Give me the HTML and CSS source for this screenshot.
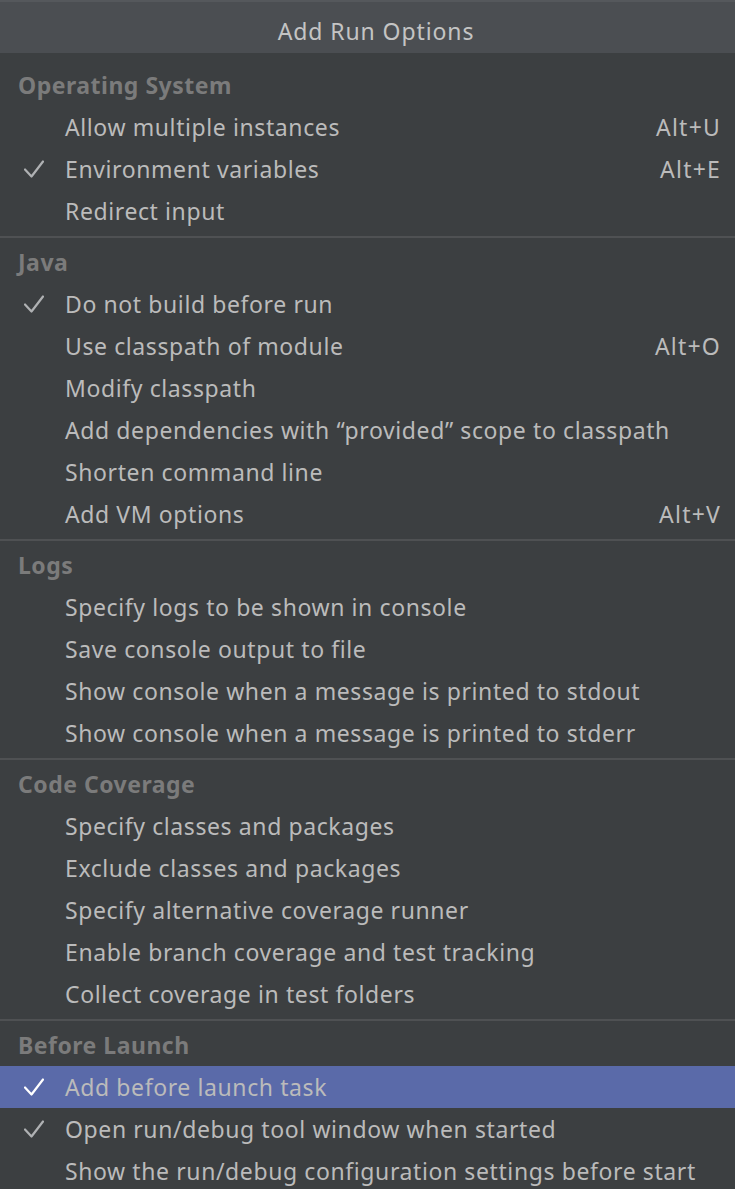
FILE: index.html
```html
<!DOCTYPE html>
<html>
<head>
<meta charset="utf-8">
<link rel="stylesheet" href="styles.css">
</head>
<body>
<div class="popup">
  <div class="title">Add Run Options</div>
  <div class="menu">
    <div class="group">
      <div class="header">Operating System</div>
      <div class="item"><span class="check"></span><span class="label">Allow multiple instances</span><span class="key">Alt+U</span></div>
      <div class="item checked"><span class="check"><svg viewBox="0 0 20 18" width="20" height="18"><path d="M1 9.5 L7.5 16.5 L19 1.5"/></svg></span><span class="label">Environment variables</span><span class="key">Alt+E</span></div>
      <div class="item"><span class="check"></span><span class="label">Redirect input</span><span class="key"></span></div>
    </div>
    <div class="sep"></div>
    <div class="group">
      <div class="header">Java</div>
      <div class="item checked"><span class="check"><svg viewBox="0 0 20 18" width="20" height="18"><path d="M1 9.5 L7.5 16.5 L19 1.5"/></svg></span><span class="label">Do not build before run</span><span class="key"></span></div>
      <div class="item"><span class="check"></span><span class="label">Use classpath of module</span><span class="key">Alt+O</span></div>
      <div class="item"><span class="check"></span><span class="label">Modify classpath</span><span class="key"></span></div>
      <div class="item"><span class="check"></span><span class="label">Add dependencies with “provided” scope to classpath</span><span class="key"></span></div>
      <div class="item"><span class="check"></span><span class="label">Shorten command line</span><span class="key"></span></div>
      <div class="item"><span class="check"></span><span class="label">Add VM options</span><span class="key">Alt+V</span></div>
    </div>
    <div class="sep"></div>
    <div class="group">
      <div class="header">Logs</div>
      <div class="item"><span class="check"></span><span class="label">Specify logs to be shown in console</span><span class="key"></span></div>
      <div class="item"><span class="check"></span><span class="label">Save console output to file</span><span class="key"></span></div>
      <div class="item"><span class="check"></span><span class="label">Show console when a message is printed to stdout</span><span class="key"></span></div>
      <div class="item"><span class="check"></span><span class="label">Show console when a message is printed to stderr</span><span class="key"></span></div>
    </div>
    <div class="sep"></div>
    <div class="group">
      <div class="header">Code Coverage</div>
      <div class="item"><span class="check"></span><span class="label">Specify classes and packages</span><span class="key"></span></div>
      <div class="item"><span class="check"></span><span class="label">Exclude classes and packages</span><span class="key"></span></div>
      <div class="item"><span class="check"></span><span class="label">Specify alternative coverage runner</span><span class="key"></span></div>
      <div class="item"><span class="check"></span><span class="label">Enable branch coverage and test tracking</span><span class="key"></span></div>
      <div class="item"><span class="check"></span><span class="label">Collect coverage in test folders</span><span class="key"></span></div>
    </div>
    <div class="sep"></div>
    <div class="group">
      <div class="header">Before Launch</div>
      <div class="item checked selected"><span class="check"><svg viewBox="0 0 20 18" width="20" height="18"><path d="M1 9.5 L7.5 16.5 L19 1.5"/></svg></span><span class="label">Add before launch task</span><span class="key"></span></div>
      <div class="item checked"><span class="check"><svg viewBox="0 0 20 18" width="20" height="18"><path d="M1 9.5 L7.5 16.5 L19 1.5"/></svg></span><span class="label">Open run/debug tool window when started</span><span class="key"></span></div>
      <div class="item"><span class="check"></span><span class="label">Show the run/debug configuration settings before start</span><span class="key"></span></div>
    </div>
  </div>
</div>
</body>
</html>
```

FILE: styles.css
```css
html, body {
  margin: 0;
  padding: 0;
  background: #3c3f41;
}
body {
  font-family: "Noto Sans", "Open Sans", "Noto Sans CJK KR", sans-serif;
  font-size: 23px;
  letter-spacing: 0.6px;
  color: #bbbbbb;
  overflow: hidden;
}
.popup {
  width: 735px;
  height: 1189px;
  overflow: hidden;
  background: #3c3f41;
}
.title {
  height: 53px;
  box-sizing: border-box;
  border-top: 2px solid #55585c;
  padding-top: 6px;
  padding-left: 17px;
  background: #4b4e52;
  color: #c4c4c4;
  font-size: 23px;
  letter-spacing: 0.9px;
  display: flex;
  align-items: center;
  justify-content: center;
}
.menu {
  padding-top: 11px;
}
.header {
  height: 42px;
  display: flex;
  align-items: center;
  padding-left: 18px;
  font-weight: bold;
  letter-spacing: 0.5px;
  color: #7b7b7b;
}
.item {
  height: 42px;
  display: grid;
  grid-template-columns: 65px 1fr auto;
  align-items: center;
  padding-right: 15px;
}
.item.selected {
  background: #5a6aa9;
}
.check {
  display: flex;
  align-items: center;
  padding-left: 24px;
}
.check svg path {
  fill: none;
  stroke: #afb1b3;
  stroke-width: 2.2;
  stroke-linecap: round;
  stroke-linejoin: round;
}
.selected .check svg path {
  stroke: #ffffff;
}
.label {
  white-space: nowrap;
}
.key {
  text-align: right;
  letter-spacing: 1.2px;
  margin-right: -1px;
}
.sep {
  height: 9px;
  display: flex;
  align-items: center;
}
.sep::before {
  content: "";
  display: block;
  width: 100%;
  height: 2px;
  background: #4f5153;
}
```
